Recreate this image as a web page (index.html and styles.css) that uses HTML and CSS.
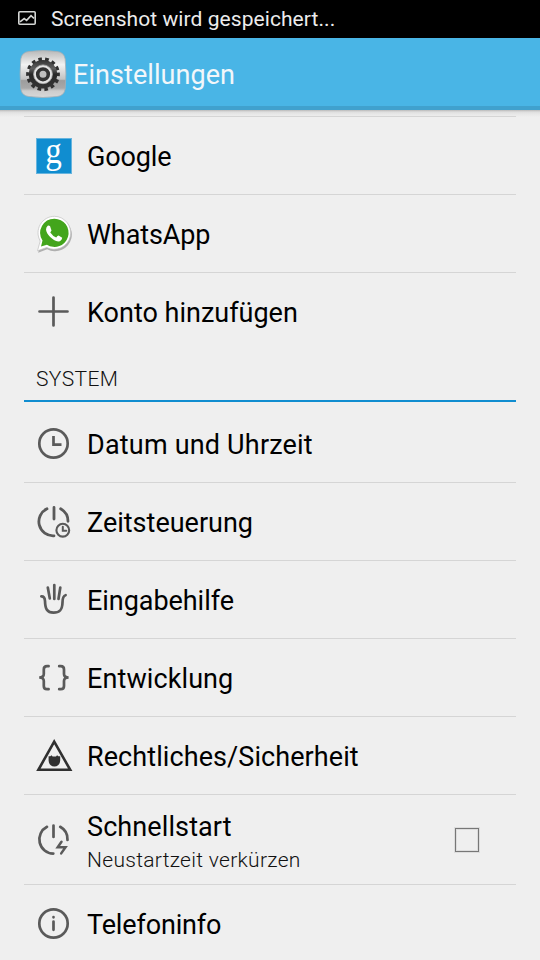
FILE: index.html
```html
<!DOCTYPE html>
<html lang="de">
<head>
<meta charset="utf-8">
<title>Einstellungen</title>
<link rel="stylesheet" href="styles.css">
</head>
<body>
<div class="status">
  <svg class="status-icon" width="18" height="14" viewBox="0 0 18 14" fill="none" stroke="#d4d6d4"><rect x=".8" y=".8" width="16.4" height="12.4" rx="1" stroke-width="1.6"/><path d="M2 10.8 6.2 7.6 8.6 9.4 13 4.6 16 7.4" stroke-width="1.6"/></svg>
  <span class="status-text">Screenshot wird gespeichert...</span>
</div>
<header class="appbar">
  <svg class="app-icon" width="48" height="48" viewBox="0 0 48 48">
    <defs>
      <linearGradient id="metal" x1="0" y1="0" x2="0" y2="1"><stop offset="0" stop-color="#b9b9b9"/><stop offset=".14" stop-color="#d2d2d2"/><stop offset=".3" stop-color="#f2f2f2"/><stop offset=".61" stop-color="#c2c2c2"/><stop offset=".64" stop-color="#9d9d9d"/><stop offset=".8" stop-color="#a8a8a8"/><stop offset=".86" stop-color="#cdcdcd"/><stop offset="1" stop-color="#d8d8d8"/></linearGradient>
      <linearGradient id="gear" x1="0" y1="0" x2="0" y2="1"><stop offset="0" stop-color="#333"/><stop offset=".3" stop-color="#606060"/><stop offset=".5" stop-color="#282828"/><stop offset="1" stop-color="#343434"/></linearGradient>
    </defs>
    <path d="M10 1.5Q24-.5 38 1.5 45 2 46.2 9 47.6 24 46.2 39 45 46 38 46.5 24 48.5 10 46.5 3 46 1.8 39 .4 24 1.8 9 3 2 10 1.5Z" fill="url(#metal)" stroke="#a4afb5" stroke-width=".8"/>
    <g transform="rotate(-6.5 24 24.3)"><circle cx="24" cy="24.3" r="15" fill="none" stroke="#303030" stroke-width="3.8" stroke-dasharray="3.6 3.13"/></g>
    <circle cx="24" cy="24.3" r="14.2" fill="url(#gear)"/>
    <circle cx="24" cy="24.3" r="9.4" fill="#e4e4e4" stroke="#aaa" stroke-width=".8"/>
    <circle cx="24" cy="24.3" r="5.3" fill="#bdbdbd" stroke="#323232" stroke-width="3.6"/>
  </svg>
  <h1 class="title">Einstellungen</h1>
</header>
<main class="list">
  <div class="row first">
    <svg class="icon" viewBox="0 0 36 36"><rect x=".5" y=".5" width="35" height="35" fill="#108dd0" stroke="#66b4de"/><g transform="scale(1 1.16)"><text class="g-logo" x="17.6" y="20" text-anchor="middle" dy="1.9">g</text></g></svg>
    <span class="label google">Google</span>
  </div>
  <div class="row">
    <svg class="icon" viewBox="0 0 36 36"><path d="M18.5.8A16.7 16.7 0 1 1 10.7 32.2L1.6 35.8 4.5 25.8A16.7 16.7 0 0 1 18.5.8Z" fill="#999" opacity=".75" transform="translate(.5 1)"/><path d="M18.5.3A16.5 16.5 0 1 1 10.7 31.5L1.5 34.8 4.2 25A16.5 16.5 0 0 1 18.5.3Z" fill="#fff" stroke="#c0c0c0" stroke-width=".7"/><path d="M18.5 2.7A14.1 14.1 0 1 1 10.9 28.7L5 30.5 6.5 24.5A14.1 14.1 0 0 1 18.5 2.7Z" fill="#43a51c"/><path d="M11.7 9.8Q10 11.2 10 13.8C10.6 18.5 16.5 24.6 22.3 25.5Q25.8 25 26.2 21.7L22.6 19.5Q21.5 19.5 20.2 21.5 16.6 20 14.3 16.5L15.5 14.5 14.1 10.2Q12.8 9.2 11.7 9.8Z" fill="#fff"/></svg>
    <span class="label whatsapp">WhatsApp</span>
  </div>
  <div class="row last">
    <svg class="icon line" viewBox="0 0 36 36"><path d="M17.5 3.5v28M3.5 17.5h28"/></svg>
    <span class="label">Konto hinzufügen</span>
  </div>
  <h2 class="section">SYSTEM</h2>
  <div class="row system-first">
    <svg class="icon line" viewBox="0 0 36 36"><circle cx="17.5" cy="17.5" r="14.2"/><path d="M17.5 10v8.6h8" stroke-linecap="butt"/></svg>
    <span class="label datum">Datum und Uhrzeit</span>
  </div>
  <div class="row">
    <svg class="icon line" viewBox="0 0 36 36"><path d="M11 4.8A14.2 14.2 0 0 0 18 31.8M24.6 4.8A14.2 14.2 0 0 1 32 17.3M18 3.5v11.5" stroke-width="2.8"/><circle cx="26.8" cy="26.2" r="6.4" stroke-width="2.1"/><path d="M26.8 22.8v4h3.5" stroke-width="2"/></svg>
    <span class="label">Zeitsteuerung</span>
  </div>
  <div class="row">
    <svg class="icon line" viewBox="0 0 36 36"><path d="M5.3 14.3C7.5 14.2 8.8 15.8 9 19 9.2 26.8 11 30.7 17.5 30.7S26.3 27.8 26.5 20.5C26.5 16 27.6 13.7 29.6 13.2" stroke-width="2.7"/><path d="M11.8 5.5 13.8 16.5M18.3 3v14M24.3 5.5 22.5 17" stroke-width="2.7"/></svg>
    <span class="label hilfe">Eingabehilfe</span>
  </div>
  <div class="row">
    <svg class="icon line" viewBox="0 0 36 36"><path d="M12.6 6.2H11Q7.8 6.2 7.8 9.4V14Q7.8 17.5 3.2 17.5 7.8 17.5 7.8 21V26Q7.8 29.2 11 29.2H12.6M23.2 6.2H24.8Q28 6.2 28 9.4V14Q28 17.5 32.6 17.5 28 17.5 28 21V26Q28 29.2 24.8 29.2H23.2" stroke-width="2.7"/></svg>
    <span class="label entw">Entwicklung</span>
  </div>
  <div class="row">
    <svg class="icon" viewBox="0 0 36 36"><path d="M18.2 3.6 2.4 31.8H34.2Z" fill="none" stroke="#303030" stroke-width="2.6"/><path d="M12.6 18.2H14.3L15.5 17.3 16.6 18.4H20L21.1 17.3 22.3 18.2H24.2V22.6Q23.6 28.4 18.4 28.6 13.2 28.4 12.6 22.6Z" fill="#303030"/></svg>
    <span class="label recht">Rechtliches/Sicherheit</span>
  </div>
  <div class="row tall">
    <svg class="icon line" viewBox="0 0 36 36"><path d="M11 4.8A14.2 14.2 0 0 0 17.3 31.6M24.2 4.8A14.2 14.2 0 0 1 31.5 18M17.5 3.5v11.5"/><path d="M25.5 19.8 21.7 25.3H29.5L25.2 31.4" stroke-width="2.5"/></svg>
    <div class="texts"><span class="label schnell">Schnellstart</span><span class="sub">Neustartzeit verkürzen</span></div>
    <span class="checkbox"></span>
  </div>
  <div class="row last">
    <svg class="icon line" viewBox="0 0 36 36"><circle cx="17.5" cy="17.5" r="14.2"/><path d="M17.5 15.5v8.3M17.5 11.2v.1" stroke-width="2.7"/></svg>
    <span class="label telefon">Telefoninfo</span>
  </div>
</main>
</body>
</html>
```
FILE: styles.css
```css
* { box-sizing: border-box; }
body { margin: 0; width: 540px; height: 960px; overflow: hidden; background: #efefef; color: #000; font-family: Roboto, sans-serif; }
.status { height: 38px; display: flex; align-items: center; padding: 0 0 2px 18px; gap: 15px; background: #000; color: #ececec; }
.status-icon { flex: none; }
.status-text { font-size: 21px; line-height: 30px; letter-spacing: .07px; padding-top: 2px; white-space: nowrap; }
.appbar { height: 72px; display: flex; align-items: center; padding-left: 19px; gap: 6px; background: #49b5e6; border-bottom: 4px solid #40a1ce; }
.app-icon { flex: none; margin-top: 4px; }
.title { margin: 6px 0 0; font-size: 27px; line-height: 36px; font-weight: 400; color: #f2f7fa; letter-spacing: .06px; }
.list { padding: 6px 24px 0; background: linear-gradient(#b9b9b9, #dedede 2px, #e7e7e7 4px, #efefef 7px); }
.row { display: flex; align-items: center; gap: 15px; height: 78px; padding: 0 37px 0 12px; border-bottom: 1px solid #d5d5d5; }
.first { height: 79px; border-top: 1px solid #d5d5d5; }
.last { border-bottom: 0; padding-bottom: 1px; }
.system-first { height: 81px; padding-top: 3px; }
.tall { height: 90px; }
.icon { flex: none; width: 36px; height: 36px; overflow: visible; }
.line { fill: none; stroke: #5a5a5a; stroke-width: 2.7; stroke-linecap: round; }
.g-logo { font: 33px "Liberation Serif", serif; fill: #fff; }
.label { font-size: 27px; line-height: 36px; white-space: nowrap; padding-top: 3px; }
.google { letter-spacing: -.15px; }
.whatsapp { letter-spacing: -.1px; }
.datum { letter-spacing: .19px; }
.hilfe { letter-spacing: -.05px; }
.entw, .schnell { letter-spacing: .1px; }
.recht { letter-spacing: .08px; }
.telefon { letter-spacing: -.15px; }
.texts { display: flex; flex-direction: column; flex: 1; }
.sub { font-size: 21px; line-height: 28px; padding-top: 1px; margin-bottom: -1px; color: #111; font-weight: 300; letter-spacing: .3px; }
.section { margin: 0; height: 51px; padding: 14px 0 0 12px; border-bottom: 2px solid #108dd0; font-size: 21px; line-height: 28px; font-weight: 300; letter-spacing: .4px; color: #111; }
.checkbox { width: 24px; height: 24px; margin-top: 1px; border: 1px solid #777; box-shadow: 0 0 0 1px #ddd, inset 0 0 0 1px #ddd; }
```
